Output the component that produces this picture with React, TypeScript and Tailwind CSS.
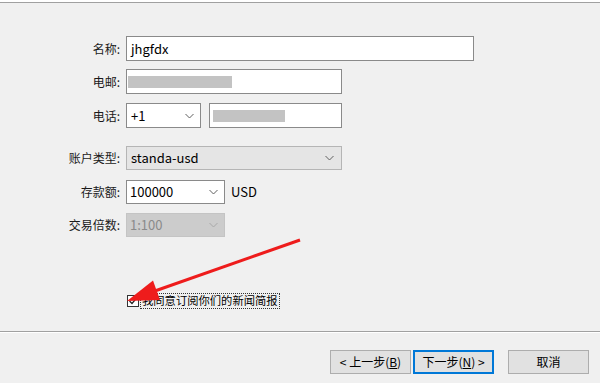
import React from "react";

const font = { fontFamily: '"Noto Sans CJK SC", "Noto Sans", sans-serif' };

function Chevron({ color = "#606060" }: { color?: string }) {
  return (
    <svg width="9" height="6" viewBox="0 0 9 6" className="shrink-0">
      <polyline points="0.5,1 4.5,5 8.5,1" fill="none" stroke={color} strokeWidth="1" />
    </svg>
  );
}

function Label({ children }: { children: React.ReactNode }) {
  return (
    <div className="w-[121px] shrink-0 text-right text-[12px] text-[#1a1a1a] leading-none pr-[1px]">{children}</div>
  );
}

export default function App() {
  return (
    <div className="relative w-[600px] h-[383px] bg-[#f0f0f0] overflow-hidden text-[12px] text-black" style={font}>
      <div className="h-[2px] bg-white" />
      <div className="h-px bg-[#a0a0a0]" />

      <div className="flex flex-col pt-[33px]">
        {/* name */}
        <div className="flex items-center h-[25px]">
          <Label>名称:</Label>
          <div className="ml-[5px] w-[348px] h-[25px] bg-white border border-[#8a8a8a] flex items-center px-[4px] text-[13px]">jhgfdx</div>
        </div>
        {/* email */}
        <div className="flex items-center h-[25px] mt-[8px]">
          <Label>电邮:</Label>
          <div className="ml-[5px] w-[216px] h-[25px] bg-white border border-[#8a8a8a] flex items-center pl-[1px]">
            <div className="w-[104px] h-[12px] bg-[#c3c3c3]" />
          </div>
        </div>
        {/* phone */}
        <div className="flex items-center h-[25px] mt-[9px]">
          <Label>电话:</Label>
          <div className="ml-[5px] w-[75px] h-[25px] bg-white border border-[#8a8a8a] flex items-center justify-between pl-[4px] pr-[6px] text-[13px]">
            <span>+1</span>
            <Chevron />
          </div>
          <div className="ml-[8px] w-[133px] h-[25px] bg-white border border-[#8a8a8a] flex items-center pl-[3px]">
            <div className="w-[72px] h-[12px] bg-[#c3c3c3]" />
          </div>
        </div>
        {/* account type */}
        <div className="flex items-center h-[24px] mt-[18px]">
          <Label>账户类型:</Label>
          <div className="ml-[5px] w-[216px] h-[24px] bg-[#e5e5e5] border border-[#b5b5b5] flex items-center justify-between pl-[4px] pr-[7px] text-[13px]">
            <span>standa-usd</span>
            <Chevron />
          </div>
        </div>
        {/* deposit */}
        <div className="flex items-center h-[24px] mt-[10px]">
          <Label>存款额:</Label>
          <div className="ml-[5px] w-[99px] h-[24px] bg-white border border-[#8a8a8a] flex items-center justify-between pl-[3px] pr-[6px] text-[13px]">
            <span>100000</span>
            <Chevron />
          </div>
          <span className="ml-[6px] text-[13px]">USD</span>
        </div>
        {/* leverage */}
        <div className="flex items-center h-[24px] mt-[9px]">
          <Label>交易倍数:</Label>
          <div className="ml-[5px] w-[99px] h-[24px] bg-[#cccccc] border border-[#c4c4c4] flex items-center justify-between pl-[3px] pr-[6px] text-[13px] text-[#8a8a8a]">
            <span>1:100</span>
            <Chevron color="#a8a8a8" />
          </div>
        </div>
        {/* checkbox */}
        <div className="flex items-center h-[16px] mt-[56px] ml-[127px]">
          <div className="w-[12px] h-[12px] bg-white border border-[#333333] flex items-center justify-center">
            <svg width="10" height="10" viewBox="0 0 10 10">
              <polyline points="1.5,5 4,7.5 8.8,1.8" fill="none" stroke="#222" strokeWidth="1.2" />
            </svg>
          </div>
          <div className="ml-[1px] h-[16px] px-[1px] border border-dotted border-[#333333] flex items-center text-[11.3px] leading-none">
            我同意订阅你们的新闻简报
          </div>
        </div>
      </div>

      <div className="absolute left-0 right-0 top-[331px] h-px bg-[#a0a0a0]" />
      <div className="absolute left-0 right-0 top-[332px] h-px bg-white" />

      <div className="absolute left-0 right-0 top-[350px] flex justify-end pr-[11px] text-[12px]">
        <button className="w-[81px] h-[24px] bg-[#e1e1e1] border border-[#adadad] flex items-center justify-center">
          &lt; 上一步(<span className="underline">B</span>)
        </button>
        <button className="ml-[2px] w-[81px] h-[24px] bg-[#e1e1e1] border-2 border-[#0078d7] flex items-center justify-center">
          下一步(<span className="underline">N</span>) &gt;
        </button>
        <button className="ml-[14px] w-[81px] h-[24px] bg-[#e1e1e1] border border-[#adadad] flex items-center justify-center">
          取消
        </button>
      </div>

      <svg className="absolute inset-0 pointer-events-none" width="600" height="383">
        <line x1="300" y1="240" x2="152" y2="292" stroke="#ee1c1c" strokeWidth="3" />
        <polygon points="127,301 153,280.5 160,300" fill="#ee1c1c" />
      </svg>
    </div>
  );
}
